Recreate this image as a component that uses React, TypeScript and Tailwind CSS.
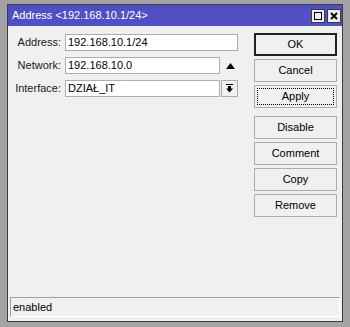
import React from 'react';

const font = { fontFamily: '"Liberation Sans", Arial, sans-serif' };

const Field = ({ label, value, right }: { label: string; value: string; right?: React.ReactNode }) => (
  <div className="flex items-center h-[17px]">
    <div className="w-[57px] text-right text-[11px] text-[#1a1a1a] pr-[4px]">{label}</div>
    <div className="flex items-center">
      <div className={`h-[17px] ${right ? 'w-[155px]' : 'w-[173px]'} bg-white border border-[#abadb3] px-[2px] text-[11px] leading-[15px] text-black`}>{value}</div>
      {right}
    </div>
  </div>
);

const Btn = ({ children, variant }: { children: React.ReactNode; variant?: 'default' | 'focus' }) => (
  <div
    className={`h-[23px] w-[83px] flex items-center justify-center text-[11px] text-black bg-[#f0f0f0] ${
      variant === 'default' ? 'border-2 border-[#202020]' : 'border border-[#adadad]'
    }`}
  >
    {variant === 'focus' ? (
      <div className="w-[77px] h-[17px] border border-dotted border-black flex items-center justify-center">{children}</div>
    ) : (
      children
    )}
  </div>
);

export default function App() {
  return (
    <div className="w-[350px] h-[327px] bg-[#a3a3a3] pt-[4px] pl-[7px]" style={font}>
      <div className="w-[336px] h-[318px] bg-[#f0f0f0] border border-[#3c3c3c] flex flex-col">
        <div className="h-[21px] bg-[#5050c4] flex items-center justify-between pl-[4px] pr-[1px]">
          <span className="text-white text-[11px]">Address &lt;192.168.10.1/24&gt;</span>
          <div className="flex gap-[2px]">
            <div className="w-[14px] h-[14px] bg-[#ebebeb] border border-[#3c3c3c] flex items-center justify-center">
              <div className="w-[8px] h-[8px] border border-black" />
            </div>
            <div className="w-[14px] h-[14px] bg-[#ebebeb] border border-[#3c3c3c] flex items-center justify-center">
              <svg width="8" height="8" viewBox="0 0 8 8">
                <path d="M1 1 L7 7 M7 1 L1 7" stroke="#000" strokeWidth="1.8" />
              </svg>
            </div>
          </div>
        </div>
        <div className="flex flex-1 pt-[7px]">
          <div className="flex flex-col gap-[6px] pt-[1px] w-[246px]">
            <Field label="Address:" value="192.168.10.1/24" />
            <Field
              label="Network:"
              value="192.168.10.0"
              right={
                <div className="w-[18px] flex justify-center ml-[1px]">
                  <svg width="9" height="6" viewBox="0 0 9 6">
                    <path d="M0 6 L4.5 0 L9 6 Z" fill="#000" />
                  </svg>
                </div>
              }
            />
            <Field
              label="Interface:"
              value="DZIAŁ_IT"
              right={
                <div className="ml-[1px] w-[17px] h-[17px] border border-[#abadb3] bg-[#f0f0f0] flex items-center justify-center">
                  <svg width="9" height="9" viewBox="0 0 9 9">
                    <path d="M1 0.5 H8" stroke="#000" strokeWidth="1" />
                    <path d="M3 2 H6 V4.5 H8 L4.5 8.5 L1 4.5 H3 Z" fill="#000" />
                  </svg>
                </div>
              }
            />
          </div>
          <div className="flex flex-col gap-[3px]">
            <Btn variant="default">OK</Btn>
            <Btn>Cancel</Btn>
            <Btn variant="focus">Apply</Btn>
            <div className="h-[2px]" />
            <Btn>Disable</Btn>
            <Btn>Comment</Btn>
            <Btn>Copy</Btn>
            <Btn>Remove</Btn>
          </div>
        </div>
        <div className="mx-[2px] mb-[4px] h-[20px] border-t border-l border-[#a0a0a0] border-b border-r border-b-white border-r-white flex items-center pl-[2px] text-[11px] text-black">
          enabled
        </div>
      </div>
    </div>
  );
}
